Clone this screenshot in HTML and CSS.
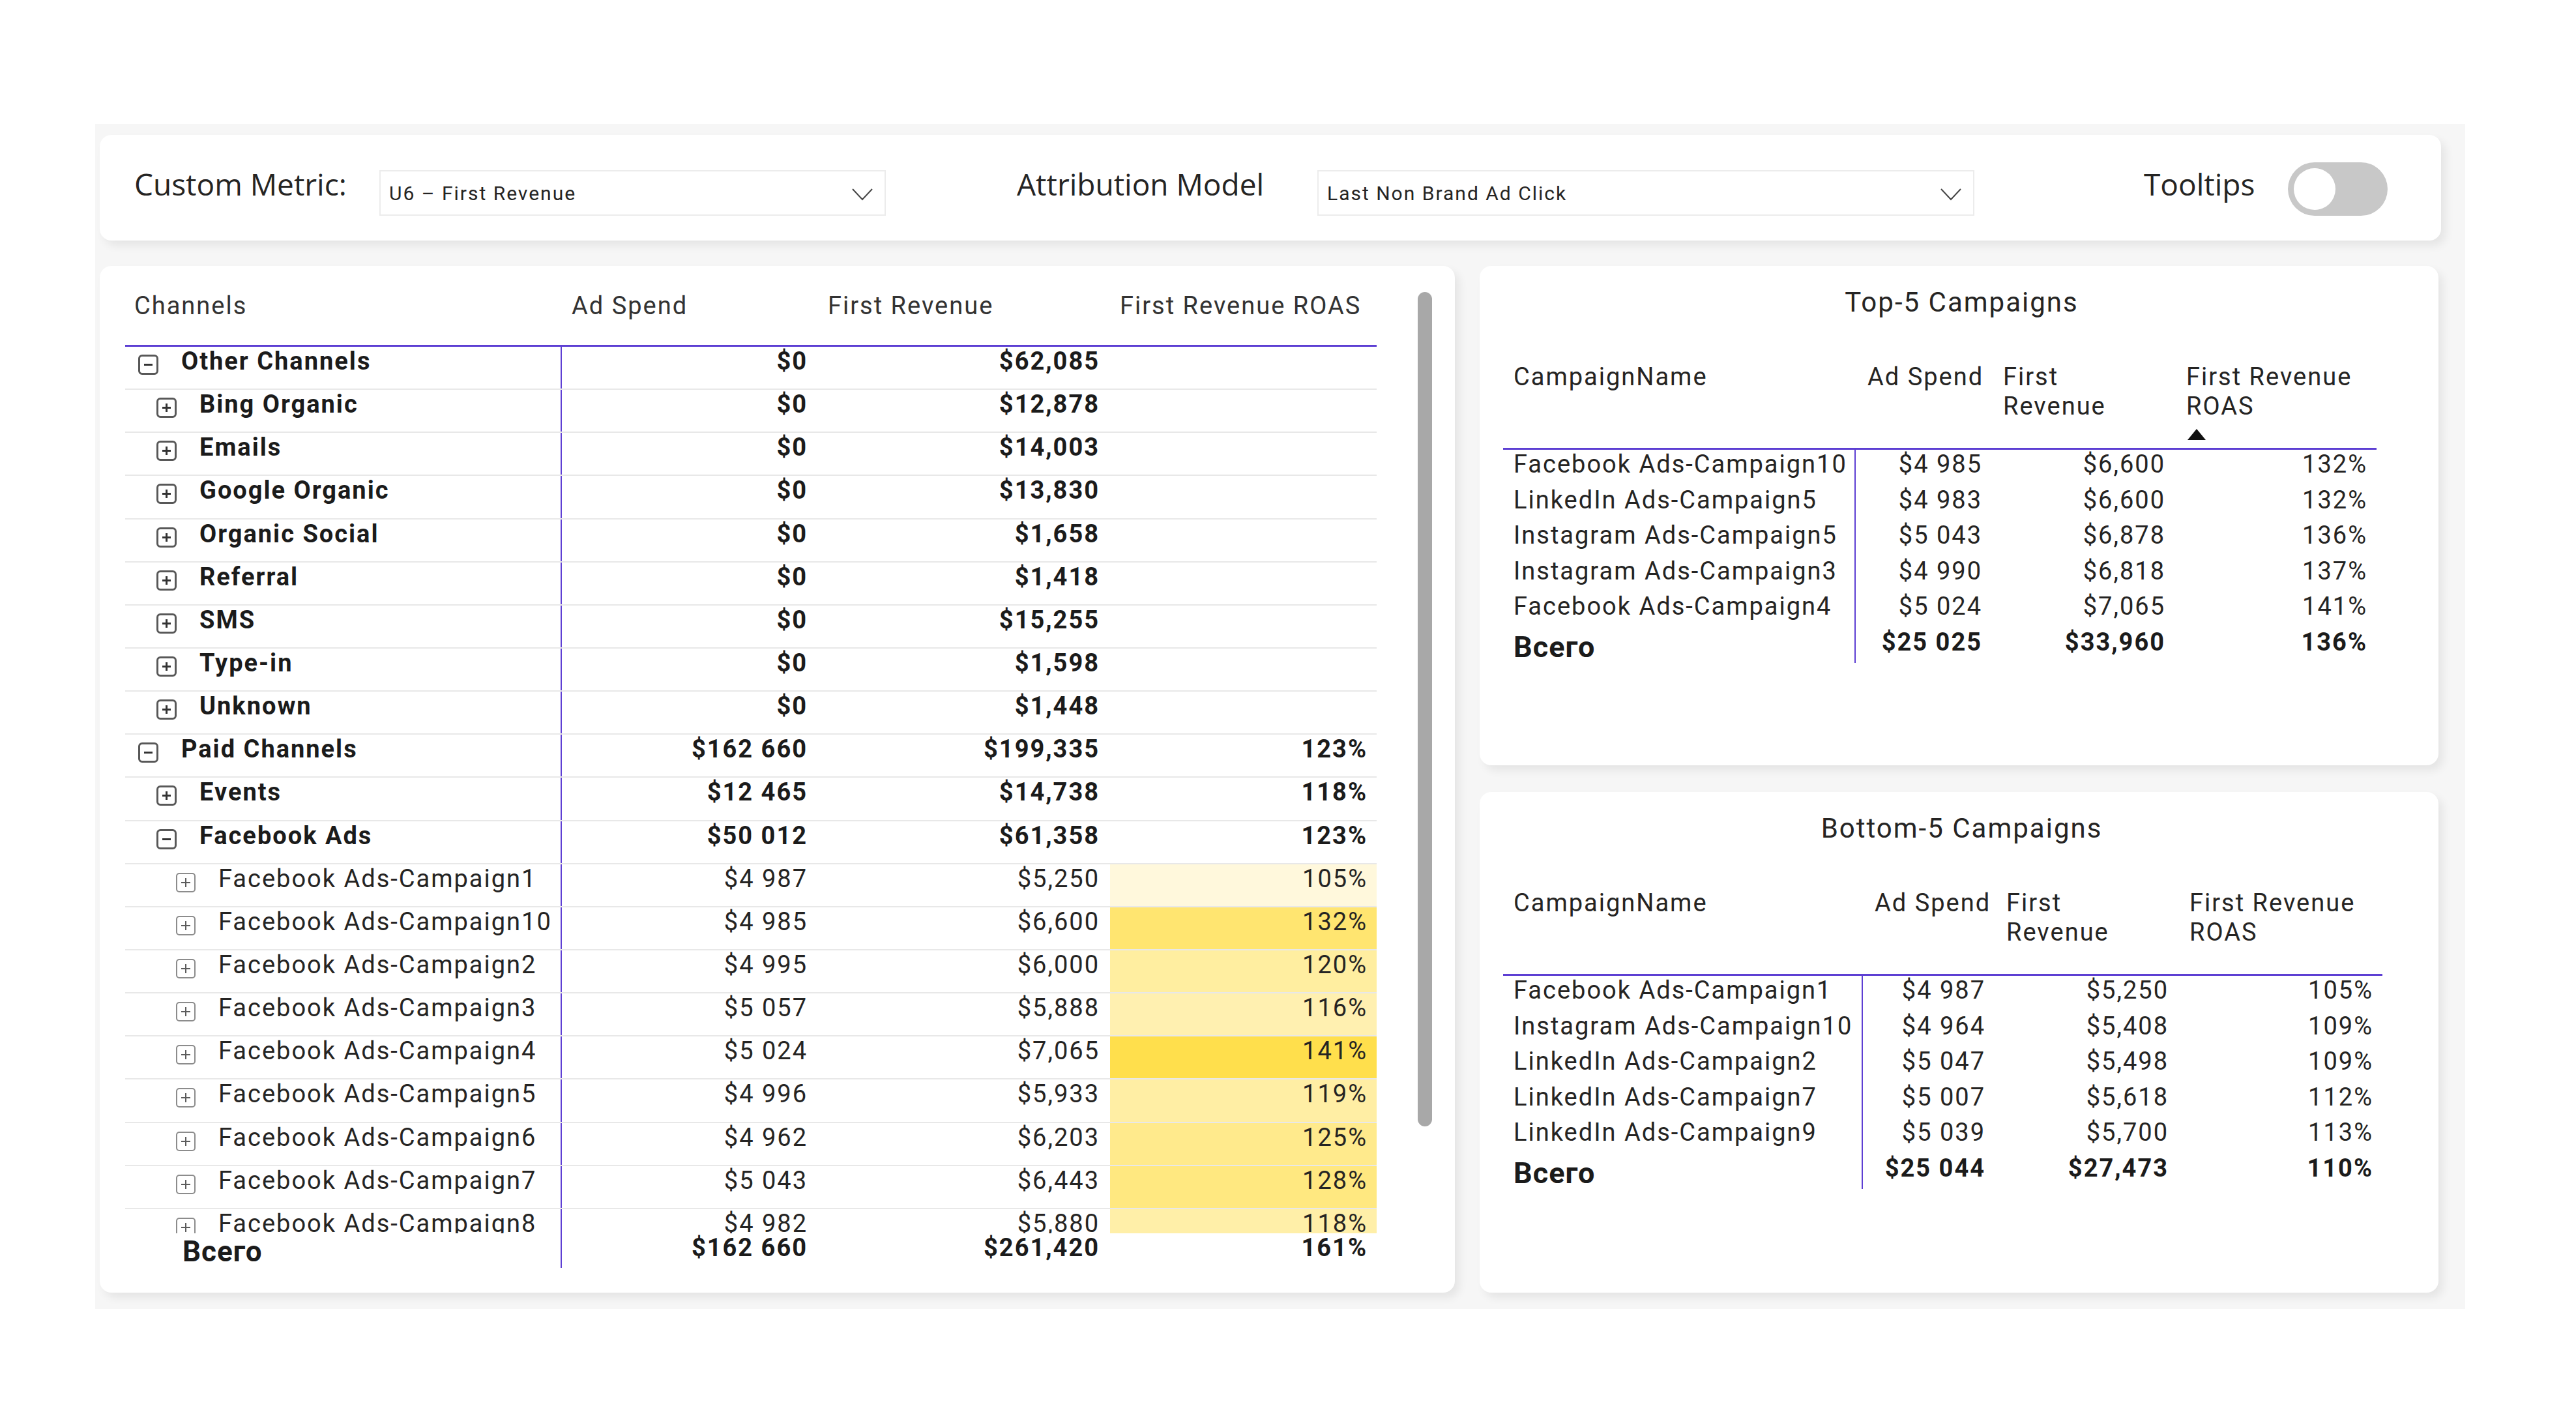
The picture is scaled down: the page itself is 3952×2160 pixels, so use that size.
FILE: index.html
```html
<!DOCTYPE html>
<html lang="en">
<head>
<meta charset="utf-8">
<title>Channels report</title>
<link rel="stylesheet" href="styles.css">
</head>
<body>
<div class="canvas">
  <div class="filters">
    <div class="flabel fl1">Custom Metric:</div>
    <div class="dropdown dd1"><span>U6 – First Revenue</span><svg class="chev" viewBox="0 0 32 19"><polyline points="1,1 16,17 31,1" fill="none" stroke="#444" stroke-width="2"/></svg></div>
    <div class="flabel fl2">Attribution Model</div>
    <div class="dropdown dd2"><span>Last Non Brand Ad Click</span><svg class="chev" viewBox="0 0 32 19"><polyline points="1,1 16,17 31,1" fill="none" stroke="#444" stroke-width="2"/></svg></div>
    <div class="flabel fl3">Tooltips</div>
    <div class="toggle"><div class="knob"></div></div>
  </div>

  <div class="main">
    <section class="card mcard">
      <div class="matrix">
        <div class="mrow mhead">
          <div class="c0">Channels</div><div>Ad Spend</div><div>First Revenue</div><div>First Revenue ROAS</div>
        </div>
        <div class="mbody">
          <div class="mrow b"><div class="c0 l0"><i class="ico minus"></i>Other Channels</div><div class="num">$0</div><div class="num">$62,085</div><div class="num"></div></div>
          <div class="mrow b"><div class="c0 l1"><i class="ico plus"></i>Bing Organic</div><div class="num">$0</div><div class="num">$12,878</div><div class="num"></div></div>
          <div class="mrow b"><div class="c0 l1"><i class="ico plus"></i>Emails</div><div class="num">$0</div><div class="num">$14,003</div><div class="num"></div></div>
          <div class="mrow b"><div class="c0 l1"><i class="ico plus"></i>Google Organic</div><div class="num">$0</div><div class="num">$13,830</div><div class="num"></div></div>
          <div class="mrow b"><div class="c0 l1"><i class="ico plus"></i>Organic Social</div><div class="num">$0</div><div class="num">$1,658</div><div class="num"></div></div>
          <div class="mrow b"><div class="c0 l1"><i class="ico plus"></i>Referral</div><div class="num">$0</div><div class="num">$1,418</div><div class="num"></div></div>
          <div class="mrow b"><div class="c0 l1"><i class="ico plus"></i>SMS</div><div class="num">$0</div><div class="num">$15,255</div><div class="num"></div></div>
          <div class="mrow b"><div class="c0 l1"><i class="ico plus"></i>Type-in</div><div class="num">$0</div><div class="num">$1,598</div><div class="num"></div></div>
          <div class="mrow b"><div class="c0 l1"><i class="ico plus"></i>Unknown</div><div class="num">$0</div><div class="num">$1,448</div><div class="num"></div></div>
          <div class="mrow b"><div class="c0 l0"><i class="ico minus"></i>Paid Channels</div><div class="num">$162 660</div><div class="num">$199,335</div><div class="num">123%</div></div>
          <div class="mrow b"><div class="c0 l1"><i class="ico plus"></i>Events</div><div class="num">$12 465</div><div class="num">$14,738</div><div class="num">118%</div></div>
          <div class="mrow b"><div class="c0 l1"><i class="ico minus"></i>Facebook Ads</div><div class="num">$50 012</div><div class="num">$61,358</div><div class="num">123%</div></div>
          <div class="mrow"><div class="c0 l2"><i class="ico plus thin"></i>Facebook Ads-Campaign1</div><div class="num">$4 987</div><div class="num">$5,250</div><div class="num" style="background:#fff8dc">105%</div></div>
          <div class="mrow"><div class="c0 l2"><i class="ico plus thin"></i>Facebook Ads-Campaign10</div><div class="num">$4 985</div><div class="num">$6,600</div><div class="num" style="background:#ffe570">132%</div></div>
          <div class="mrow"><div class="c0 l2"><i class="ico plus thin"></i>Facebook Ads-Campaign2</div><div class="num">$4 995</div><div class="num">$6,000</div><div class="num" style="background:#ffeea0">120%</div></div>
          <div class="mrow"><div class="c0 l2"><i class="ico plus thin"></i>Facebook Ads-Campaign3</div><div class="num">$5 057</div><div class="num">$5,888</div><div class="num" style="background:#fff0b0">116%</div></div>
          <div class="mrow"><div class="c0 l2"><i class="ico plus thin"></i>Facebook Ads-Campaign4</div><div class="num">$5 024</div><div class="num">$7,065</div><div class="num" style="background:#ffdf4c">141%</div></div>
          <div class="mrow"><div class="c0 l2"><i class="ico plus thin"></i>Facebook Ads-Campaign5</div><div class="num">$4 996</div><div class="num">$5,933</div><div class="num" style="background:#ffeea4">119%</div></div>
          <div class="mrow"><div class="c0 l2"><i class="ico plus thin"></i>Facebook Ads-Campaign6</div><div class="num">$4 962</div><div class="num">$6,203</div><div class="num" style="background:#ffea8c">125%</div></div>
          <div class="mrow"><div class="c0 l2"><i class="ico plus thin"></i>Facebook Ads-Campaign7</div><div class="num">$5 043</div><div class="num">$6,443</div><div class="num" style="background:#ffe880">128%</div></div>
          <div class="mrow"><div class="c0 l2"><i class="ico plus thin"></i>Facebook Ads-Campaign8</div><div class="num">$4 982</div><div class="num">$5,880</div><div class="num" style="background:#ffefa8">118%</div></div>
        </div>
        <div class="mrow mtotal">
          <div class="c0"><span class="vsego">Всего</span></div><div class="num">$162 660</div><div class="num">$261,420</div><div class="num">161%</div>
        </div>
      </div>
      <div class="scrollbar"></div>
    </section>

    <div class="side">
      <section class="card tcard">
        <div class="ttitle">Top-5 Campaigns</div>
        <div class="ct ct-top">
          <div class="crow chead">
            <div class="n">CampaignName</div><div>Ad Spend</div><div>First<br>Revenue</div><div>First Revenue<br>ROAS<svg class="sort" viewBox="0 0 28 17"><polygon points="14,0 28,17 0,17" fill="#111"/></svg></div>
          </div>
          <div class="crow"><div class="n">Facebook Ads-Campaign10</div><div class="num">$4 985</div><div class="num">$6,600</div><div class="num">132%</div></div>
          <div class="crow"><div class="n">LinkedIn Ads-Campaign5</div><div class="num">$4 983</div><div class="num">$6,600</div><div class="num">132%</div></div>
          <div class="crow"><div class="n">Instagram Ads-Campaign5</div><div class="num">$5 043</div><div class="num">$6,878</div><div class="num">136%</div></div>
          <div class="crow"><div class="n">Instagram Ads-Campaign3</div><div class="num">$4 990</div><div class="num">$6,818</div><div class="num">137%</div></div>
          <div class="crow"><div class="n">Facebook Ads-Campaign4</div><div class="num">$5 024</div><div class="num">$7,065</div><div class="num">141%</div></div>
          <div class="crow ctotal"><div class="n"><span class="vsego">Всего</span></div><div class="num">$25 025</div><div class="num">$33,960</div><div class="num">136%</div></div>
        </div>
      </section>

      <section class="card tcard bcard">
        <div class="ttitle">Bottom-5 Campaigns</div>
        <div class="ct ct-bot">
          <div class="crow chead">
            <div class="n">CampaignName</div><div>Ad Spend</div><div>First<br>Revenue</div><div>First Revenue<br>ROAS</div>
          </div>
          <div class="crow"><div class="n">Facebook Ads-Campaign1</div><div class="num">$4 987</div><div class="num">$5,250</div><div class="num">105%</div></div>
          <div class="crow"><div class="n">Instagram Ads-Campaign10</div><div class="num">$4 964</div><div class="num">$5,408</div><div class="num">109%</div></div>
          <div class="crow"><div class="n">LinkedIn Ads-Campaign2</div><div class="num">$5 047</div><div class="num">$5,498</div><div class="num">109%</div></div>
          <div class="crow"><div class="n">LinkedIn Ads-Campaign7</div><div class="num">$5 007</div><div class="num">$5,618</div><div class="num">112%</div></div>
          <div class="crow"><div class="n">LinkedIn Ads-Campaign9</div><div class="num">$5 039</div><div class="num">$5,700</div><div class="num">113%</div></div>
          <div class="crow ctotal"><div class="n"><span class="vsego">Всего</span></div><div class="num">$25 044</div><div class="num">$27,473</div><div class="num">110%</div></div>
        </div>
      </section>
    </div>
  </div>
</div>
</body>
</html>
```

FILE: styles.css
```css
* { box-sizing: border-box; }
html, body { margin: 0; background: #ffffff; }
body {
  font-family: Roboto, "DejaVu Sans", sans-serif;
  color: #252423;
  --purple: #5d3fd3;
}

.canvas {
  margin: 190px 0 0 146px;
  width: 3636px;
  height: 1818px;
  background: #f6f6f6;
  padding: 17px 0 0 7px;
}

.card, .filters {
  background: #ffffff;
  border-radius: 18px;
  box-shadow: 7px 8px 14px rgba(0, 0, 0, 0.07);
}

/* ---------- filter bar ---------- */
.filters {
  width: 3592px;
  height: 162px;
  display: flex;
  align-items: flex-start;
  padding-left: 53px;
}
.flabel {
  font-family: "Open Sans", sans-serif;
  font-size: 46px;
  line-height: 62px;
  margin-top: 44px;
  color: #252423;
  white-space: nowrap;
}
.fl1 { width: 376px; }
.fl2 { width: 461px; margin-left: 201px; }
.fl3 { width: 221px; margin-left: 260px; }

.dropdown {
  margin-top: 54px;
  height: 70px;
  border: 2px solid #ececec;
  display: flex;
  align-items: center;
  justify-content: space-between;
  padding: 0 18px 0 13px;
  font-size: 30px;
  letter-spacing: 2px;
  white-space: nowrap;
}
.dd1 { width: 777px; }
.dd2 { width: 1008px; }
.chev { width: 32px; height: 19px; margin-top: 4px; }

.toggle {
  margin-top: 42px;
  width: 153px;
  height: 82px;
  border-radius: 41px;
  background: #c8c8c8;
  padding: 9px;
}
.knob { width: 64px; height: 64px; border-radius: 50%; background: #ffffff; }

/* ---------- layout ---------- */
.main { display: flex; gap: 38px; margin-top: 39px; }
.side { display: flex; flex-direction: column; gap: 41px; width: 1471px; }

/* ---------- matrix ---------- */
.mcard { width: 2079px; height: 1575px; display: flex; padding-left: 39px; }
.matrix {
  width: 1920px;
  font-size: 38px;
  letter-spacing: 2px;
  line-height: 44px;
  white-space: nowrap;
}
.scrollbar {
  width: 22px;
  height: 1280px;
  margin: 40px 0 0 63px;
  border-radius: 11px;
  background: #a8a8a8;
}
.mrow { display: grid; grid-template-columns: 670px 393px 448px 409px; }
.mhead {
  height: 124px;
  padding-top: 39px;
  border-bottom: 3px solid var(--purple);
  color: #333333;
}
.mhead > div { padding-left: 15px; }
.mhead > .c0 { padding-left: 14px; }
.mbody { height: 1360px; overflow: hidden; }
.mbody .mrow { height: 66.15px; border-bottom: 2px solid #e8e8e8; }
.c0 {
  border-right: 2px solid var(--purple);
  display: flex;
  align-items: flex-start;
}
.mhead .c0 { border-right: none; }
.num { text-align: right; padding-right: 16px; }
.mrow .num:last-child { padding-right: 14px; }
.b { font-weight: 700; color: #1b1b1b; }
.l0 { padding-left: 20px; }
.l1 { padding-left: 48px; }
.l2 { padding-left: 78px; }

.ico {
  flex: none;
  width: 31px;
  height: 31px;
  margin: 12px 35px 0 0;
  border: 3px solid #585858;
  border-radius: 6px;
  background: linear-gradient(#333333, #333333) center / 13px 3px no-repeat;
}
.ico.plus {
  background:
    linear-gradient(#333333, #333333) center / 13px 3px no-repeat,
    linear-gradient(#333333, #333333) center / 3px 13px no-repeat;
}
.ico.thin {
  width: 30px;
  height: 30px;
  margin-top: 13px;
  border: 2px solid #8c8c8c;
  border-radius: 5px;
  background:
    linear-gradient(#5c5c5c, #5c5c5c) center / 14px 2px no-repeat,
    linear-gradient(#5c5c5c, #5c5c5c) center / 2px 14px no-repeat;
}

.mtotal { height: 53px; font-weight: 700; color: #1b1b1b; }
.mtotal .c0 { padding-left: 88px; }
.vsego { font-size: 44px; line-height: 44px; padding-top: 6px; display: block; letter-spacing: 1px; }

/* ---------- campaign tables ---------- */
.tcard { height: 766px; padding-top: 32px; }
.bcard { height: 768px; }
.ttitle {
  font-size: 42px;
  line-height: 48px;
  text-align: center;
  letter-spacing: 2px;
  color: #252423;
  padding-left: 8px;
}
.ct {
  margin: 68px 0 0 36px;
  font-size: 38px;
  letter-spacing: 2px;
  line-height: 44px;
  white-space: nowrap;
}
.ct-top { width: 1340px; }
.ct-bot { width: 1349px; }
.ct-top .crow { display: grid; grid-template-columns: 541px 208px 281px 310px; }
.ct-bot .crow { display: grid; grid-template-columns: 552px 202px 281px 314px; }
.crow { height: 54.5px; }
.crow .n { padding-left: 16px; border-right: 2px solid var(--purple); }
.crow .num { padding-right: 14px; }
.chead {
  height: 134px !important;
  border-bottom: 3px solid var(--purple);
  line-height: 45px;
  color: #252423;
}
.chead > div { padding-left: 18px; white-space: normal; }
.chead > .n { border-right: none; padding-left: 16px; }
.sort { display: block; width: 28px; height: 17px; margin: 12px 0 0 2px; }
.ctotal { height: 54px; font-weight: 700; color: #1b1b1b; }
.ctotal .vsego { font-size: 45px; padding-top: 8px; }
```
